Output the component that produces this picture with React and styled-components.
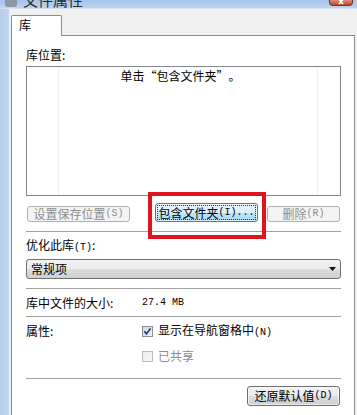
import React from 'react';
import styled, { createGlobalStyle } from 'styled-components';

const GlobalStyle = createGlobalStyle`
    html, body {
        margin: 0;
        padding: 0;
        background: #f0f0f0;
    }
    * {
        box-sizing: border-box;
    }
`;

const cjk = `"Noto Sans CJK SC", "Noto Sans", sans-serif`;

export default function App() {
    return (
        <>
            <GlobalStyle />
            <Window>
                <TitleBar>
                    <TitleIcon />
                    <TitleText>文件属性</TitleText>
                    <CloseBtn>
                        <svg width="10" height="5" viewBox="0 0 10 5">
                            <path d="M2 -2 L7 4 M8 -2 L3 4" stroke="#fff" strokeWidth="1.6" />
                        </svg>
                    </CloseBtn>
                </TitleBar>

                <Body>
                    <Frame />
                    <Client>
                        <TabStrip>
                            <Tab>库</Tab>
                        </TabStrip>

                        <Panel>
                            <Label $top={13}>库位置:</Label>
                            <ListBox>
                                <Column $left={31} />
                                <Column $left={290} />
                                <Hint>
                                    单击<Quote>“</Quote>包含文件夹<Quote>”</Quote>。
                                </Hint>
                            </ListBox>

                            <ButtonRow>
                                <Button $w={103} disabled>
                                    设置保存位置<Latin>(S)</Latin>
                                </Button>
                                <FocusWrap>
                                    <Button $w={103} $focus>
                                        <FocusRing>
                                            包含文件夹<Latin>(I)...</Latin>
                                        </FocusRing>
                                    </Button>
                                    <Highlight />
                                </FocusWrap>
                                <Button $w={73} disabled>
                                    删除<Latin>(R)</Latin>
                                </Button>
                            </ButtonRow>

                            <Separator $top={9} />

                            <Label $top={7}>
                                优化此库<Latin>(T)</Latin>:
                            </Label>
                            <Select>
                                <span>常规项</span>
                                <svg width="7" height="4" viewBox="0 0 7 4">
                                    <path d="M0 0 H7 L3.5 4 Z" fill="#111" />
                                </svg>
                            </Select>

                            <Separator $top={9} />

                            <InfoRow $top={8}>
                                <span>库中文件的大小:</span>
                                <Latin>27.4 MB</Latin>
                            </InfoRow>

                            <Separator $top={7} />

                            <InfoRow $top={8}>
                                <span>属性:</span>
                                <Checks>
                                    <CheckRow>
                                        <CheckBox checked />
                                        <span>
                                            显示在导航窗格中<Latin>(N)</Latin>
                                        </span>
                                    </CheckRow>
                                    <CheckRow $disabled>
                                        <CheckBox />
                                        <span>已共享</span>
                                    </CheckRow>
                                </Checks>
                            </InfoRow>

                            <Separator $top={16} />

                            <FooterRow>
                                <Button $w={93} $h={20}>
                                    还原默认值<Latin>(D)</Latin>
                                </Button>
                            </FooterRow>
                        </Panel>
                    </Client>
                </Body>
            </Window>
        </>
    );
}

function CheckBox({ checked }) {
    return (
        <svg width="11" height="11" viewBox="0 0 11 11">
            <defs>
                <linearGradient id={checked ? 'cbOn' : 'cbOff'} x1="0" y1="0" x2="1" y2="1">
                    <stop offset="0" stopColor={checked ? '#c9d3e3' : '#ececec'} />
                    <stop offset="1" stopColor={checked ? '#f2f4f8' : '#f7f7f7'} />
                </linearGradient>
            </defs>
            <rect
                x="0.5"
                y="0.5"
                width="10"
                height="10"
                fill={`url(#${checked ? 'cbOn' : 'cbOff'})`}
                stroke={checked ? '#8e8f8f' : '#bcbcbc'}
            />
            {checked && (
                <path d="M2.3 5.3 L4.4 7.8 L8.6 2.4" fill="none" stroke="#2a3f78" strokeWidth="1.7" />
            )}
        </svg>
    );
}

// 스타일

const Window = styled.div`
    width: 357px;
    height: 415px;
    overflow: hidden;
    display: flex;
    flex-direction: column;
    background: #f0f0f0;
    font-family: ${cjk};
    font-size: 12px;
    color: #000;
`;

const TitleBar = styled.div`
    height: 9px;
    flex-shrink: 0;
    display: flex;
    align-items: flex-start;
    overflow: hidden;
    background: linear-gradient(#a7c3e8, #bfd4ee);
    border-bottom: 1px solid #d4e2f3;
`;

const TitleIcon = styled.div`
    width: 12px;
    height: 14px;
    margin: -7px 0 0 5px;
    border-radius: 3px;
    background: #8c97a6;
`;

const TitleText = styled.div`
    margin: -8px 0 0 6px;
    font-size: 15px;
    line-height: 15px;
    color: #2b2b2b;
`;

const CloseBtn = styled.div`
    margin-left: auto;
    margin-right: 4px;
    width: 24px;
    height: 6px;
    display: flex;
    justify-content: center;
    align-items: flex-start;
    border: 1px solid #7a3226;
    border-top: none;
    border-radius: 0 0 4px 4px;
    background: linear-gradient(#d9907f, #c2452f);
`;

const Body = styled.div`
    flex: 1;
    display: flex;
    min-height: 0;
`;

const Frame = styled.div`
    width: 9px;
    flex-shrink: 0;
    background: linear-gradient(90deg, #b6cdea, #c3d6ee);
`;

const Client = styled.div`
    flex: 1;
    display: flex;
    flex-direction: column;
    padding: 6px 2px 0 2px;
    background: #f0f0f0;
`;

const TabStrip = styled.div`
    display: flex;
    height: 20px;
    flex-shrink: 0;
`;

const Tab = styled.div`
    width: 51px;
    height: 21px;
    padding: 3px 0 0 7px;
    line-height: 12px;
    background: #fff;
    border: 1px solid #898c95;
    border-bottom: none;
    border-radius: 2px 2px 0 0;
    position: relative;
    z-index: 1;
`;

const Panel = styled.div`
    flex: 1;
    display: flex;
    flex-direction: column;
    background: #fff;
    border: 1px solid #898c95;
    border-bottom: none;
    padding: 0 13px 0 14px;
`;

const Label = styled.div`
    margin-top: ${(p) => p.$top}px;
    line-height: 12px;
    height: 12px;
`;

const Latin = styled.span`
    font-family: "Liberation Mono", monospace;
    font-size: 10px;
`;

const ListBox = styled.div`
    margin-top: 5px;
    height: 130px;
    border: 1px solid #828790;
    position: relative;
    display: flex;
    justify-content: center;
`;

const Column = styled.div`
    position: absolute;
    top: 0;
    bottom: 0;
    left: ${(p) => p.$left}px;
    width: 1px;
    background: #f1f1f1;
`;

const Hint = styled.div`
    margin-top: 3px;
    line-height: 12px;
    padding-right: 6px;
`;

const Quote = styled.span`
    display: inline-block;
    width: 12px;
    text-align: center;
`;

const ButtonRow = styled.div`
    margin-top: 6px;
    height: 20px;
    display: flex;
    align-items: flex-end;
    padding-left: 1px;

    & > * + * {
        margin-left: 25px;
    }
    & > * + * + * {
        margin-left: 9px;
    }
`;

const Button = styled.button`
    width: ${(p) => p.$w}px;
    height: ${(p) => (p.$h ? p.$h : p.$focus ? 19 : 16)}px;
    padding: ${(p) => (p.$focus ? '1px' : '0')};
    display: flex;
    align-items: center;
    justify-content: center;
    font-family: ${cjk};
    font-size: 12px;
    line-height: 12px;
    color: #000;
    border: 1px solid #707070;
    border-radius: 3px;
    background: linear-gradient(#f2f2f2 0%, #ebebeb 50%, #dddddd 51%, #cfcfcf 100%);
    box-shadow: inset 0 0 0 1px rgba(255, 255, 255, 0.6);

    ${(p) =>
        p.$focus &&
        `
        border-color: #3c7fb1;
        background: linear-gradient(#eaf6fd 0%, #d9f0fc 50%, #bee6fd 51%, #a7d9f5 100%);
    `}

    &:disabled {
        color: #8d8d8d;
        border-color: #adb2b5;
        background: #f4f4f4;
        box-shadow: none;
    }
`;

const FocusRing = styled.span`
    flex: 1;
    align-self: stretch;
    display: flex;
    align-items: center;
    justify-content: center;
    border: 1px dotted #333;
`;

const FocusWrap = styled.div`
    position: relative;
    display: flex;
`;

const Highlight = styled.div`
    position: absolute;
    left: -7px;
    top: -11px;
    width: 118px;
    height: 47px;
    border: 4px solid #e0141e;
    pointer-events: none;
`;

const Separator = styled.div`
    margin-top: ${(p) => p.$top}px;
    height: 1px;
    flex-shrink: 0;
    background: #a0a0a0;
`;

const Select = styled.div`
    margin-top: 8px;
    height: 20px;
    display: flex;
    align-items: center;
    justify-content: space-between;
    padding: 0 4px 0 4px;
    border: 1px solid #707070;
    border-radius: 3px;
    background: linear-gradient(#f2f2f2 0%, #ebebeb 50%, #dddddd 51%, #cfcfcf 100%);
    line-height: 12px;
`;

const InfoRow = styled.div`
    margin-top: ${(p) => p.$top}px;
    display: grid;
    grid-template-columns: 116px 1fr;
    align-items: start;
    line-height: 12px;
`;

const Checks = styled.div`
    display: flex;
    flex-direction: column;
    gap: 13px;
`;

const CheckRow = styled.div`
    display: flex;
    align-items: center;
    gap: 5px;
    height: 12px;
    color: ${(p) => (p.$disabled ? '#8d8d8d' : '#000')};
`;

const FooterRow = styled.div`
    margin-top: 7px;
    display: flex;
    justify-content: flex-end;
    padding-right: 1px;
`;
